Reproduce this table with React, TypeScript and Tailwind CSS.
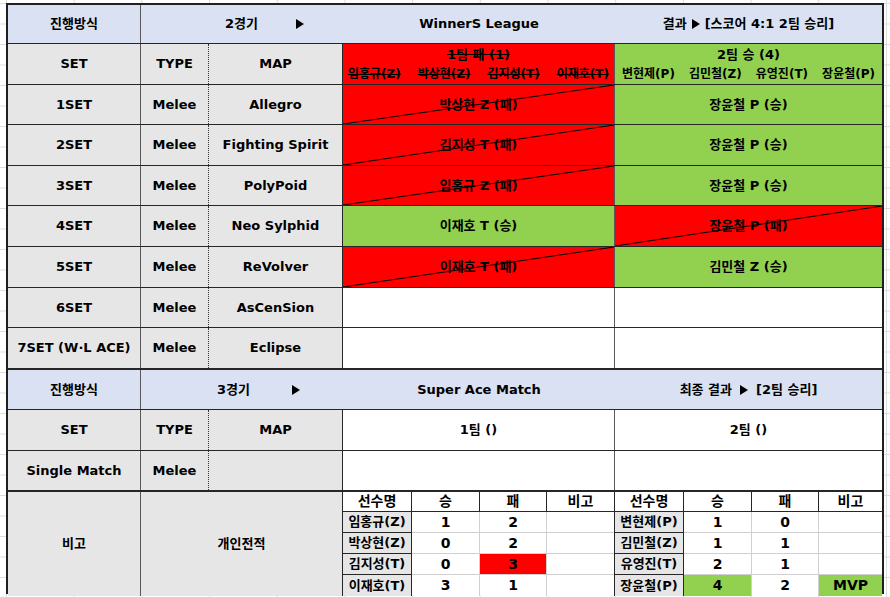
import React from 'react';

type Res = { text: string; win: boolean } | null;

const cols = 'grid grid-cols-[133px_68px_134px_272px_1fr]';

const sets: { set: string; map: string; h: string; t1: Res; t2: Res }[] = [
  { set: '1SET', map: 'Allegro', h: 'h-[40px]', t1: { text: '박상현 Z (패)', win: false }, t2: { text: '장윤철 P (승)', win: true } },
  { set: '2SET', map: 'Fighting Spirit', h: 'h-[41px]', t1: { text: '김지성 T (패)', win: false }, t2: { text: '장윤철 P (승)', win: true } },
  { set: '3SET', map: 'PolyPoid', h: 'h-[40px]', t1: { text: '임홍규 Z (패)', win: false }, t2: { text: '장윤철 P (승)', win: true } },
  { set: '4SET', map: 'Neo Sylphid', h: 'h-[41px]', t1: { text: '이재호 T (승)', win: true }, t2: { text: '장윤철 P (패)', win: false } },
  { set: '5SET', map: 'ReVolver', h: 'h-[41px]', t1: { text: '이재호 T (패)', win: false }, t2: { text: '김민철 Z (승)', win: true } },
  { set: '6SET', map: 'AsCenSion', h: 'h-[40px]', t1: null, t2: null },
  { set: '7SET (W·L ACE)', map: 'Eclipse', h: 'h-[42px] border-b-2', t1: null, t2: null },
];

const team1 = [
  { name: '임홍규(Z)', w: '1', l: '2', note: '', hl: '' },
  { name: '박상현(Z)', w: '0', l: '2', note: '', hl: '' },
  { name: '김지성(T)', w: '0', l: '3', note: '', hl: 'l' },
  { name: '이재호(T)', w: '3', l: '1', note: '', hl: '' },
];

const team2 = [
  { name: '변현제(P)', w: '1', l: '0', note: '', hl: '' },
  { name: '김민철(Z)', w: '1', l: '1', note: '', hl: '' },
  { name: '유영진(T)', w: '2', l: '1', note: '', hl: '' },
  { name: '장윤철(P)', w: '4', l: '2', note: 'MVP', hl: 'wn' },
];

function Tri() {
  return (
    <svg width="8" height="10" viewBox="0 0 8 10">
      <path d="M0 0 L8 5 L0 10 Z" fill="#000" />
    </svg>
  );
}

function Diag() {
  return (
    <svg className="pointer-events-none absolute inset-0 h-full w-full" viewBox="0 0 100 100" preserveAspectRatio="none">
      <line x1="0" y1="100" x2="100" y2="0" stroke="#000" strokeWidth="1" vectorEffect="non-scaling-stroke" />
    </svg>
  );
}

function ResultCell({ r, first }: { r: Res; first: boolean }) {
  const edge = first ? 'border-r border-[#595959]' : '';
  if (!r) return <div className={`bg-white ${edge}`} />;
  return (
    <div className={`relative flex items-center justify-center ${r.win ? 'bg-[#92d050]' : 'bg-[#ff0000]'} ${edge}`}>
      {!r.win && <Diag />}
      <span>{r.text}</span>
    </div>
  );
}

function Sub({ rows, first }: { rows: typeof team1; first: boolean }) {
  return (
    <div className={`grid grid-cols-[69px_68px_67px_1fr] grid-rows-[20px_21px_21px_21px_1fr] bg-white ${first ? 'border-r border-[#262626]' : ''}`}>
      {['선수명', '승', '패', '비고'].map((h, i) => (
        <div key={h} className={`flex items-center justify-center border-b border-[#262626] text-[14px] ${i < 3 ? 'border-r' : ''}`}>
          {h}
        </div>
      ))}
      {rows.map((p, i) => {
        const last = i === rows.length - 1;
        return (
          <React.Fragment key={p.name}>
            <div className={`flex items-center justify-center border-r border-[#262626] bg-[#e7e6e6] ${last ? '' : 'border-b'}`}>{p.name}</div>
            <div className={`flex items-center justify-center border-r border-[#d0d0d0] text-[14px] ${last ? '' : 'border-b'} ${p.hl === 'wn' ? 'bg-[#92d050]' : ''}`}>{p.w}</div>
            <div className={`flex items-center justify-center border-r border-[#d0d0d0] text-[14px] ${last ? '' : 'border-b'} ${p.hl === 'l' ? 'bg-[#ff0000]' : ''}`}>{p.l}</div>
            <div className={`flex items-center justify-center border-[#d0d0d0] text-[14px] ${last ? '' : 'border-b'} ${p.hl === 'wn' ? 'bg-[#92d050]' : ''}`}>{p.note}</div>
          </React.Fragment>
        );
      })}
    </div>
  );
}

export default function App() {
  const gray = 'bg-[#e7e6e6]';
  const c1 = `flex items-center justify-center ${gray} border-r border-[#595959]`;
  const c2 = `flex items-center justify-center ${gray} border-r border-dotted border-[#333]`;
  const c3 = `flex items-center justify-center ${gray} border-r border-[#262626]`;

  return (
    <div className="h-[597px] w-[890px] overflow-hidden bg-white bg-[linear-gradient(to_right,#dcdcdc_1px,transparent_1px),linear-gradient(to_bottom,#dcdcdc_1px,transparent_1px)] bg-[length:67.7px_20.5px] bg-[position:6px_3px] pl-[6px] pt-[3px] font-['DejaVu_Sans','Noto_Sans_CJK_KR',sans-serif] text-[13px] font-bold text-black">
      <div className="w-[878px] border-2 border-[#1f1f1f]">
        {/* 2경기 */}
        <div className={`${cols} h-[39px] border-b border-[#262626] bg-[#d9e1f2]`}>
          <div className="flex items-center justify-center border-r border-[#595959]">진행방식</div>
          <div className="col-span-2 flex items-center">
            <span className="ml-[84px]">2경기</span>
            <span className="ml-[38px] flex"><Tri /></span>
          </div>
          <div className="flex items-center justify-center">WinnerS League</div>
          <div className="flex items-center justify-center gap-[5px]">
            결과 <Tri /> [스코어 4:1 2팀 승리]
          </div>
        </div>

        <div className={`${cols} h-[41px] border-b border-[#262626]`}>
          <div className={c1}>SET</div>
          <div className={c2}>TYPE</div>
          <div className={c3}>MAP</div>
          <div className="flex flex-col border-r border-[#595959] bg-[#ff0000] pt-[3px]">
            <div className="text-center leading-[16px] line-through">1팀 패 (1)</div>
            <div className="mt-[4px] flex justify-between px-[5px] text-[12px] leading-[14px] line-through">
              <span>임홍규(Z)</span>
              <span>박상현(Z)</span>
              <span>김지성(T)</span>
              <span>이재호(T)</span>
            </div>
          </div>
          <div className="flex flex-col bg-[#92d050] pt-[3px]">
            <div className="text-center leading-[16px]">2팀 승 (4)</div>
            <div className="mt-[4px] flex justify-between px-[7px] text-[12px] leading-[14px]">
              <span>변현제(P)</span>
              <span>김민철(Z)</span>
              <span>유영진(T)</span>
              <span>장윤철(P)</span>
            </div>
          </div>
        </div>

        {sets.map((s) => (
          <div key={s.set} className={`${cols} ${s.h} border-b border-[#262626]`}>
            <div className={c1}>{s.set}</div>
            <div className={c2}>Melee</div>
            <div className={c3}>{s.map}</div>
            <ResultCell r={s.t1} first />
            <ResultCell r={s.t2} first={false} />
          </div>
        ))}

        {/* 3경기 */}
        <div className={`${cols} h-[40px] border-b border-[#262626] bg-[#d9e1f2]`}>
          <div className="flex items-center justify-center border-r border-[#595959]">진행방식</div>
          <div className="col-span-2 flex items-center">
            <span className="ml-[76px]">3경기</span>
            <span className="ml-[42px] flex"><Tri /></span>
          </div>
          <div className="flex items-center justify-center">Super Ace Match</div>
          <div className="flex items-center justify-center gap-[8px]">
            최종 결과 <Tri /> [2팀 승리]
          </div>
        </div>

        <div className={`${cols} h-[41px] border-b border-[#262626]`}>
          <div className={c1}>SET</div>
          <div className={c2}>TYPE</div>
          <div className={c3}>MAP</div>
          <div className="flex items-center justify-center border-r border-[#595959] bg-white">1팀 ()</div>
          <div className="flex items-center justify-center bg-white">2팀 ()</div>
        </div>

        <div className={`${cols} h-[41px] border-b-2 border-[#262626]`}>
          <div className={c1}>Single Match</div>
          <div className={c2}>Melee</div>
          <div className={c3}></div>
          <div className="border-r border-[#595959] bg-white" />
          <div className="bg-white" />
        </div>

        <div className={`${cols} h-[100px]`}>
          <div className={c1}>비고</div>
          <div className={`col-span-2 ${c3}`}>개인전적</div>
          <Sub rows={team1} first />
          <Sub rows={team2} first={false} />
        </div>
      </div>
    </div>
  );
}
